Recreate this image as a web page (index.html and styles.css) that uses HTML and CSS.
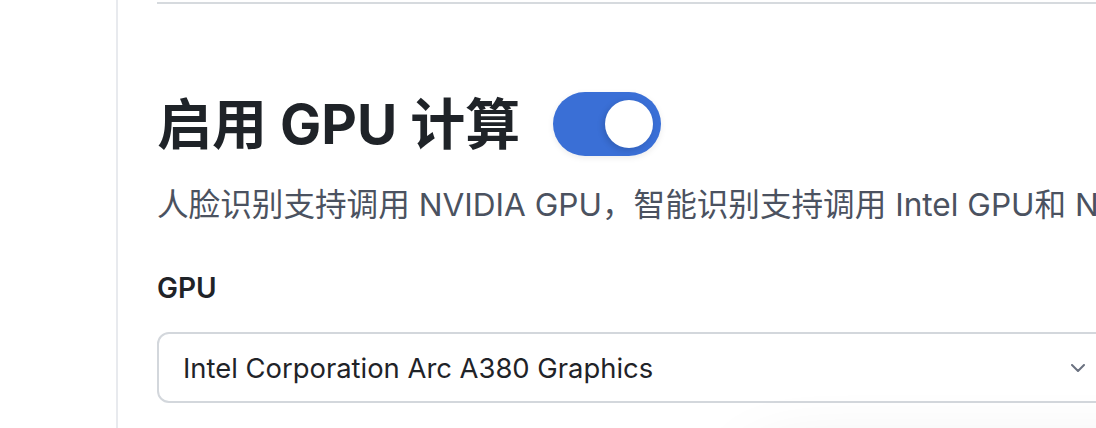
FILE: index.html
```html
<!DOCTYPE html>
<html lang="zh-CN">
<head>
<meta charset="utf-8">
<title>GPU</title>
<link rel="stylesheet" href="styles.css">
</head>
<body>
<div class="layout">
  <aside class="sidebar"></aside>
  <main class="content">
    <hr class="divider">
    <section class="setting">
      <div class="setting-head">
        <h2 class="setting-title">启用 GPU 计算</h2>
        <button class="toggle is-on" type="button" aria-pressed="true"><span class="knob"></span></button>
      </div>
      <p class="setting-desc">人脸识别支持调用 NVIDIA GPU，智能识别支持调用 Intel GPU和 NVIDIA GPU</p>
      <label class="field-label">GPU</label>
      <div class="select">
        <span class="select-value">Intel Corporation Arc A380 Graphics</span>
        <svg class="chevron" viewBox="0 0 14 8" width="14" height="8" aria-hidden="true"><path d="M1 1l6 6 6-6" fill="none" stroke="currentColor" stroke-width="2" stroke-linecap="round" stroke-linejoin="round"/></svg>
      </div>
    </section>
  </main>
</div>
<div class="floating-panel"></div>
</body>
</html>
```
FILE: styles.css
```css
html, body {
  margin: 0;
  padding: 0;
  background: #ffffff;
  overflow: hidden;
  height: 428px;
}
body {
  font-family: Inter, "Noto Sans CJK SC", sans-serif;
  color: #1f2328;
  position: relative;
}
.layout {
  display: flex;
  height: 428px;
}
.sidebar {
  width: 116px;
  flex: none;
  border-right: 2px solid #e8eaee;
}
.content {
  flex: none;
  width: 952px;
  padding-left: 39px;
}
.divider {
  margin: 2px 0 0 0;
  border: 0;
  height: 2px;
  background: #d6dade;
}
.setting-head {
  display: flex;
  align-items: center;
  gap: 33px;
  margin-top: 88px;
  height: 64px;
}
.setting-title {
  margin: 0;
  font-size: 55px;
  line-height: 64px;
  font-weight: 700;
  color: #1f2328;
  white-space: nowrap;
}
.toggle {
  width: 108px;
  height: 64px;
  border-radius: 32px;
  border: 0;
  padding: 0;
  background: #3a6fd6;
  display: flex;
  align-items: center;
  justify-content: flex-end;
  padding-right: 8px;
  box-sizing: border-box;
  box-shadow: 0 2px 6px rgba(0, 0, 0, 0.08);
}
.knob {
  width: 48px;
  height: 48px;
  border-radius: 50%;
  background: #ffffff;
  box-shadow: -2px 2px 6px rgba(0, 0, 0, 0.15);
}
.setting-desc {
  margin: 25px 0 0 0;
  font-size: 31.6px;
  line-height: 48px;
  color: #4b5260;
  white-space: nowrap;
}
.field-label {
  display: block;
  margin-top: 39px;
  font-size: 28px;
  line-height: 40px;
  font-weight: 600;
  color: #1f2328;
}
.select {
  margin-top: 24px;
  height: 71px;
  box-sizing: border-box;
  border: 2px solid #d3d7dc;
  border-radius: 12px;
  display: flex;
  align-items: center;
  justify-content: space-between;
  padding: 0 22px 0 24px;
}
.select-value {
  font-size: 27.4px;
  color: #1f2328;
}
.chevron {
  color: #6b7280;
}
.floating-panel {
  position: absolute;
  left: 760px;
  top: 470px;
  width: 500px;
  height: 200px;
  background: #ffffff;
  box-shadow: 0 0 80px rgba(0, 0, 0, 0.16);
}
```
